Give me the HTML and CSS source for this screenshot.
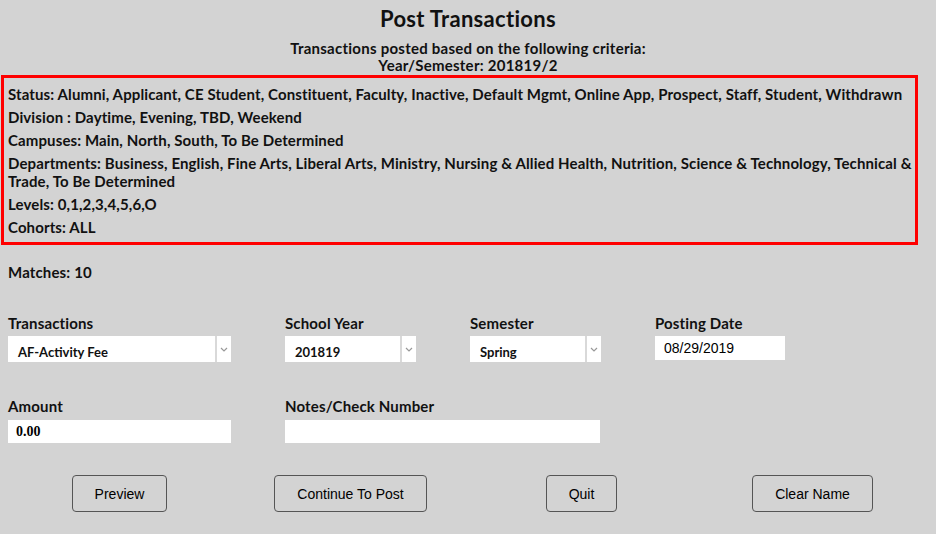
FILE: index.html
```html
<!DOCTYPE html>
<html lang="en">
<head>
    <meta charset="UTF-8">
    <meta name="viewport" content="width=device-width, initial-scale=1.0">
    <title>Post Transactions</title>
    <link rel="stylesheet" href="styles.css">
</head>
<body>

    <h1>Post Transactions</h1>
    <div class="subtitle">
        <div>Transactions posted based on the following criteria:</div>
        <div>Year/Semester: 201819/2</div>
    </div>

    <div class="criteria">
        <p>Status: Alumni, Applicant, CE Student, Constituent, Faculty, Inactive, Default Mgmt, Online App, Prospect, Staff, Student, Withdrawn</p>
        <p>Division : Daytime, Evening, TBD, Weekend</p>
        <p>Campuses: Main, North, South, To Be Determined</p>
        <p>Departments: Business, English, Fine Arts, Liberal Arts, Ministry, Nursing &amp; Allied Health, Nutrition, Science &amp; Technology, Technical &amp; Trade, To Be Determined</p>
        <p>Levels: 0,1,2,3,4,5,6,O</p>
        <p>Cohorts: ALL</p>
    </div>

    <div class="matches">Matches: 10</div>

    <div class="form-row">
        <div class="field">
            <label>Transactions</label>
            <div class="select select-wide">
                <span class="select-value">AF-Activity Fee</span>
                <span class="select-arrow">
                    <svg width="8" height="5" viewBox="0 0 8 5"><path d="M1 1 L4 4 L7 1" fill="none" stroke="#999" stroke-width="1.2"/></svg>
                </span>
            </div>
        </div>
        <div class="field">
            <label>School Year</label>
            <div class="select select-narrow">
                <span class="select-value">201819</span>
                <span class="select-arrow">
                    <svg width="8" height="5" viewBox="0 0 8 5"><path d="M1 1 L4 4 L7 1" fill="none" stroke="#999" stroke-width="1.2"/></svg>
                </span>
            </div>
        </div>
        <div class="field">
            <label>Semester</label>
            <div class="select select-narrow">
                <span class="select-value">Spring</span>
                <span class="select-arrow">
                    <svg width="8" height="5" viewBox="0 0 8 5"><path d="M1 1 L4 4 L7 1" fill="none" stroke="#999" stroke-width="1.2"/></svg>
                </span>
            </div>
        </div>
        <div class="field">
            <label>Posting Date</label>
            <input type="text" class="date-input" value="08/29/2019">
        </div>
    </div>

    <div class="form-row second-row">
        <div class="field">
            <label>Amount</label>
            <input type="text" class="amount-input" value="0.00">
        </div>
        <div class="field field-span">
            <label>Notes/Check Number</label>
            <input type="text" class="notes-input" value="">
        </div>
    </div>

    <div class="buttons">
        <div class="button-cell"><button>Preview</button></div>
        <div class="button-cell"><button>Continue To Post</button></div>
        <div class="button-cell"><button>Quit</button></div>
        <div class="button-cell"><button>Clear Name</button></div>
    </div>

</body>
</html>
```

FILE: styles.css
```css
body {
    font-family: Lato, "DejaVu Sans", sans-serif;
    font-weight: bold;
    font-size: 15px;
    letter-spacing: 0.15px;
    color: #111;
    background-color: #d3d3d3;
    margin: 0;
    padding: 0;
    width: 936px;
    height: 534px;
    overflow: hidden;
}

h1 {
    font-size: 22px;
    letter-spacing: 0.3px;
    line-height: 24px;
    text-align: center;
    margin: 7px 0 0 0;
}

.subtitle {
    font-size: 15px;
    letter-spacing: 0.25px;
    line-height: 17px;
    text-align: center;
    margin-top: 9px;
}

.criteria {
    margin: 1px 18px 0 1px;
    border: 3px solid #ff0000;
    padding: 7px 0 1px 4px;
}

.criteria p {
    margin: 0 0 5px 0;
    line-height: 18px;
    letter-spacing: 0.12px;
}

.matches {
    margin: 18px 0 0 8px;
    line-height: 18px;
}

.form-row {
    display: grid;
    grid-template-columns: 277px 185px 185px 1fr;
    padding-left: 8px;
    margin-top: 33px;
}

.second-row {
    margin-top: 35px;
}

.field label {
    display: block;
    line-height: 18px;
    margin-bottom: 4px;
}

.field-span {
    grid-column: span 2;
}

.select {
    display: flex;
    height: 26px;
    background-color: #fff;
}

.select-wide {
    width: 223px;
}

.select-narrow {
    width: 131px;
}

.select-value {
    flex: 1;
    font-size: 13px;
    letter-spacing: 0;
    line-height: 26px;
    padding: 3px 0 0 10px;
    box-sizing: border-box;
}

.select-arrow {
    width: 14px;
    border-left: 2px solid #d9d9d9;
    display: flex;
    align-items: center;
    justify-content: center;
}

input {
    border: none;
    outline: none;
    margin: 0;
    background-color: #fff;
    box-sizing: border-box;
    letter-spacing: 0;
}

.date-input {
    width: 130px;
    height: 24px;
    padding-left: 9px;
    font-family: "Liberation Sans", Arial, sans-serif;
    font-size: 14px;
    font-weight: normal;
    color: #000;
}

.amount-input {
    width: 223px;
    height: 23px;
    margin-top: 1px;
    padding-left: 8px;
    font-family: "Liberation Serif", "Times New Roman", serif;
    font-size: 14px;
    font-weight: bold;
    color: #000;
}

.notes-input {
    width: 315px;
    height: 23px;
    margin-top: 1px;
}

.buttons {
    display: grid;
    grid-template-columns: repeat(4, 1fr);
    padding: 0 8px 0 4px;
    margin-top: 32px;
}

.button-cell {
    display: flex;
    justify-content: center;
}

button {
    font-family: "Liberation Sans", Arial, sans-serif;
    font-size: 14px;
    letter-spacing: 0;
    color: #000;
    background-color: #d3d3d3;
    border: 1px solid #555;
    border-radius: 4px;
    height: 37px;
    padding: 0 22px;
    cursor: pointer;
}

button:hover {
    background-color: #c8c8c8;
}
```
